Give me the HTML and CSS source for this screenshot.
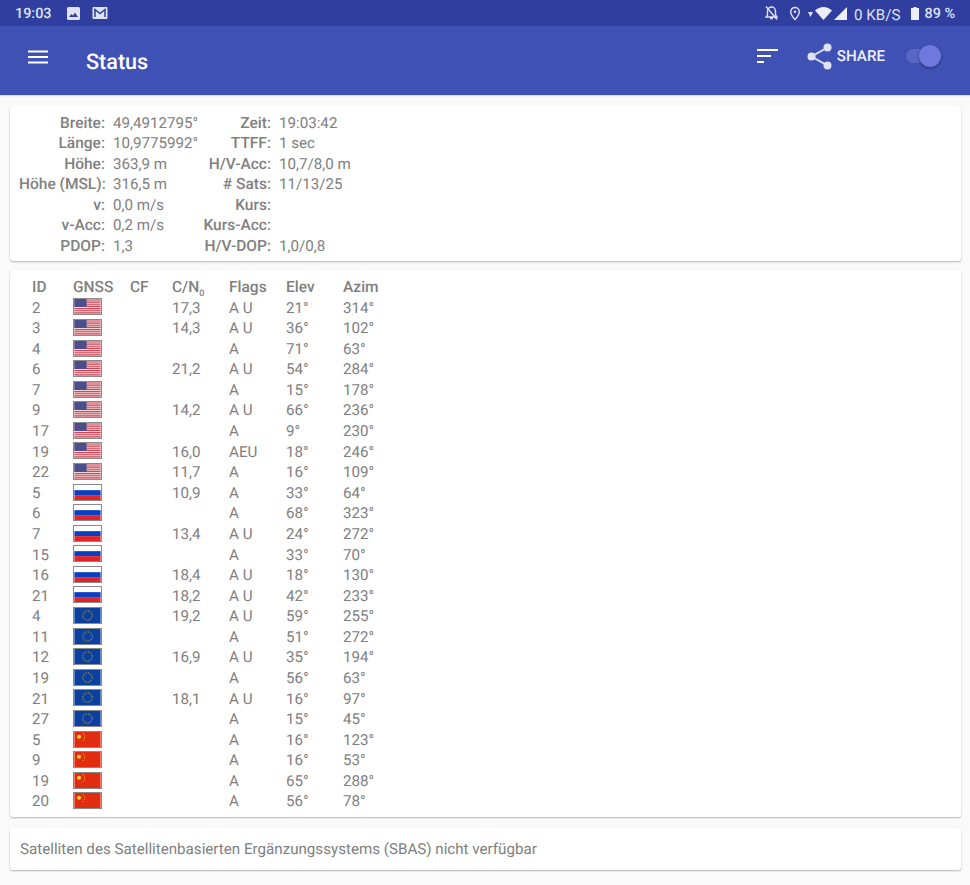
FILE: index.html
```html
<!DOCTYPE html>
<html lang="de">
<head>
<meta charset="utf-8">
<title>Status</title>
<link rel="stylesheet" href="styles.css">
</head>
<body>
<svg class="defs" width="0" height="0" aria-hidden="true">
  <symbol id="us" viewBox="0 0 28 16">
    <rect width="28" height="16" fill="#f3d6d6"/>
    <path d="M0 1h28M0 3.3h28M0 5.6h28M0 7.9h28M0 10.2h28M0 12.5h28M0 14.8h28" stroke="#c9485a" stroke-width="1.2"/>
    <rect width="13" height="8.5" fill="#4a4f8c"/>
  </symbol>
  <symbol id="ru" viewBox="0 0 28 16">
    <rect width="28" height="5.5" fill="#fff"/>
    <rect y="5.5" width="28" height="5.3" fill="#0b3fc0"/>
    <rect y="10.8" width="28" height="5.2" fill="#e0242c"/>
  </symbol>
  <symbol id="eu" viewBox="0 0 28 16">
    <rect width="28" height="16" fill="#0c3f9e"/>
    <circle cx="14" cy="8" r="5" fill="none" stroke="#8f9450" stroke-width="1.3" stroke-dasharray="1.3 1.3"/>
  </symbol>
  <symbol id="cn" viewBox="0 0 28 16">
    <rect width="28" height="16" fill="#e22c10"/>
    <circle cx="5" cy="5" r="2.2" fill="#f7d32c"/>
    <path d="M9 2h1M10.500 4.200h1M10.500 6.800h1M9 9h1" stroke="#f3b81f" stroke-width="1.100"/>
  </symbol>
</svg>

<div class="statusbar">
  <span class="time">19:03</span>
  <svg class="sb-icon" width="15" height="15" viewBox="0 0 15 15"><rect x="1" y="1" width="13" height="13" rx="1.500" fill="#dfe2f2"/><path d="M3 11l2.500-3 1.500 1.500 2-3 3 4.500z" fill="#303f9f"/></svg>
  <svg class="sb-icon mail" width="16" height="14" viewBox="0 0 16 14"><rect x="0.500" y="1" width="15" height="12" rx="1" fill="#dfe2f2"/><path d="M3 11V3.500l5 4 5-4V11" fill="none" stroke="#303f9f" stroke-width="1.500"/></svg>
  <span class="spacer"></span>
  <svg class="sb-icon" width="15" height="16" viewBox="0 0 15 16"><path d="M7.500 2a4 4 0 0 1 4 4v4l1.500 2H2l1.500-2V6a4 4 0 0 1 4-4zM6 13.500h3" fill="none" stroke="#dfe2f2" stroke-width="1.400"/><path d="M2 1.500l11 13" stroke="#dfe2f2" stroke-width="1.400"/></svg>
  <svg class="sb-icon pin" width="12" height="15" viewBox="0 0 12 15"><path d="M6 1.500a4.300 4.300 0 0 1 4.300 4.300C10.300 9 6 13.500 6 13.500S1.700 9 1.700 5.800A4.300 4.300 0 0 1 6 1.500z" fill="none" stroke="#dfe2f2" stroke-width="1.400"/><circle cx="6" cy="5.800" r="1.300" fill="#dfe2f2"/></svg>
  <svg class="sb-icon tri" width="5" height="5" viewBox="0 0 5 5"><path d="M0 0h5L2.500 5z" fill="#dfe2f2"/></svg>
  <svg class="sb-icon wifi" width="17" height="13" viewBox="0 0 17 13"><path d="M0 3.500C2.500 1.300 5.300 0 8.500 0S14.500 1.300 17 3.500L8.500 13z" fill="#eceef8"/></svg>
  <svg class="sb-icon sig" width="13" height="13" viewBox="0 0 13 13"><path d="M13 0v13H0z" fill="#eceef8"/></svg>
  <span class="kbs">0 KB/S</span>
  <svg class="sb-icon batt" width="8" height="13" viewBox="0 0 8 13"><path d="M2.500 0h3v1H8v12H0V1h2.500z" fill="#eceef8"/></svg>
  <span class="pct">89 %</span>
</div>

<header class="appbar">
  <svg class="menu" width="22" height="14" viewBox="0 0 22 14"><path d="M1 1.500h20M1 7h20M1 12.500h20" stroke="#fff" stroke-width="2"/></svg>
  <h1 class="title">Status</h1>
  <span class="spacer"></span>
  <svg class="sort" width="21" height="14" viewBox="0 0 21 14"><path d="M0 1h21M0 7h14M0 13h7" stroke="#fff" stroke-width="2"/></svg>
  <svg class="share" width="25" height="27" viewBox="0 0 25 27"><g fill="#dfe2f2"><circle cx="20.500" cy="4.500" r="4"/><circle cx="4.500" cy="13.500" r="4"/><circle cx="20.500" cy="22.500" r="4"/></g><path d="M20.500 4.500l-16 9 16 9" fill="none" stroke="#dfe2f2" stroke-width="2"/></svg>
  <span class="share-label">SHARE</span>
  <span class="switch"><span class="thumb"></span></span>
</header>

<main class="content">
  <section class="card info">
    <div class="lbl">Breite:</div><div>49,4912795°</div><div class="lbl">Zeit:</div><div>19:03:42</div>
    <div class="lbl">Länge:</div><div>10,9775992°</div><div class="lbl">TTFF:</div><div>1 sec</div>
    <div class="lbl">Höhe:</div><div>363,9 m</div><div class="lbl">H/V-Acc:</div><div>10,7/8,0 m</div>
    <div class="lbl">Höhe (MSL):</div><div>316,5 m</div><div class="lbl"># Sats:</div><div>11/13/25</div>
    <div class="lbl">v:</div><div>0,0 m/s</div><div class="lbl">Kurs:</div><div></div>
    <div class="lbl">v-Acc:</div><div>0,2 m/s</div><div class="lbl">Kurs-Acc:</div><div></div>
    <div class="lbl">PDOP:</div><div>1,3</div><div class="lbl">H/V-DOP:</div><div>1,0/0,8</div>
  </section>

  <section class="card sats">
    <div class="row head"><span>ID</span><span>GNSS</span><span>CF</span><span>C/N<sub>0</sub></span><span>Flags</span><span>Elev</span><span>Azim</span></div>
    <div class="row"><span>2</span><svg class="flag"><use href="#us"/></svg><span></span><span>17,3</span><span>A U</span><span>21°</span><span>314°</span></div>
    <div class="row"><span>3</span><svg class="flag"><use href="#us"/></svg><span></span><span>14,3</span><span>A U</span><span>36°</span><span>102°</span></div>
    <div class="row"><span>4</span><svg class="flag"><use href="#us"/></svg><span></span><span></span><span>A</span><span>71°</span><span>63°</span></div>
    <div class="row"><span>6</span><svg class="flag"><use href="#us"/></svg><span></span><span>21,2</span><span>A U</span><span>54°</span><span>284°</span></div>
    <div class="row"><span>7</span><svg class="flag"><use href="#us"/></svg><span></span><span></span><span>A</span><span>15°</span><span>178°</span></div>
    <div class="row"><span>9</span><svg class="flag"><use href="#us"/></svg><span></span><span>14,2</span><span>A U</span><span>66°</span><span>236°</span></div>
    <div class="row"><span>17</span><svg class="flag"><use href="#us"/></svg><span></span><span></span><span>A</span><span>9°</span><span>230°</span></div>
    <div class="row"><span>19</span><svg class="flag"><use href="#us"/></svg><span></span><span>16,0</span><span>AEU</span><span>18°</span><span>246°</span></div>
    <div class="row"><span>22</span><svg class="flag"><use href="#us"/></svg><span></span><span>11,7</span><span>A</span><span>16°</span><span>109°</span></div>
    <div class="row"><span>5</span><svg class="flag"><use href="#ru"/></svg><span></span><span>10,9</span><span>A</span><span>33°</span><span>64°</span></div>
    <div class="row"><span>6</span><svg class="flag"><use href="#ru"/></svg><span></span><span></span><span>A</span><span>68°</span><span>323°</span></div>
    <div class="row"><span>7</span><svg class="flag"><use href="#ru"/></svg><span></span><span>13,4</span><span>A U</span><span>24°</span><span>272°</span></div>
    <div class="row"><span>15</span><svg class="flag"><use href="#ru"/></svg><span></span><span></span><span>A</span><span>33°</span><span>70°</span></div>
    <div class="row"><span>16</span><svg class="flag"><use href="#ru"/></svg><span></span><span>18,4</span><span>A U</span><span>18°</span><span>130°</span></div>
    <div class="row"><span>21</span><svg class="flag"><use href="#ru"/></svg><span></span><span>18,2</span><span>A U</span><span>42°</span><span>233°</span></div>
    <div class="row"><span>4</span><svg class="flag"><use href="#eu"/></svg><span></span><span>19,2</span><span>A U</span><span>59°</span><span>255°</span></div>
    <div class="row"><span>11</span><svg class="flag"><use href="#eu"/></svg><span></span><span></span><span>A</span><span>51°</span><span>272°</span></div>
    <div class="row"><span>12</span><svg class="flag"><use href="#eu"/></svg><span></span><span>16,9</span><span>A U</span><span>35°</span><span>194°</span></div>
    <div class="row"><span>19</span><svg class="flag"><use href="#eu"/></svg><span></span><span></span><span>A</span><span>56°</span><span>63°</span></div>
    <div class="row"><span>21</span><svg class="flag"><use href="#eu"/></svg><span></span><span>18,1</span><span>A U</span><span>16°</span><span>97°</span></div>
    <div class="row"><span>27</span><svg class="flag"><use href="#eu"/></svg><span></span><span></span><span>A</span><span>15°</span><span>45°</span></div>
    <div class="row"><span>5</span><svg class="flag"><use href="#cn"/></svg><span></span><span></span><span>A</span><span>16°</span><span>123°</span></div>
    <div class="row"><span>9</span><svg class="flag"><use href="#cn"/></svg><span></span><span></span><span>A</span><span>16°</span><span>53°</span></div>
    <div class="row"><span>19</span><svg class="flag"><use href="#cn"/></svg><span></span><span></span><span>A</span><span>65°</span><span>288°</span></div>
    <div class="row"><span>20</span><svg class="flag"><use href="#cn"/></svg><span></span><span></span><span>A</span><span>56°</span><span>78°</span></div>
  </section>

  <section class="card note">Satelliten des Satellitenbasierten Ergänzungssystems (SBAS) nicht verfügbar</section>
</main>
</body>
</html>
```
FILE: styles.css
```css
* { box-sizing: border-box; }
html, body { margin: 0; height: 885px; overflow: hidden; }
body {
  background: #fafafa;
  font-family: Roboto, "Liberation Sans", sans-serif;
  font-size: 15.15px;
  color: #808080;
  text-rendering: geometricPrecision;
}
.defs { position: absolute; }
.spacer { flex: 1; }

.statusbar {
  height: 26px;
  background: #303f9f;
  color: #dfe2f2;
  display: flex;
  align-items: center;
  padding: 0 11px 0 15px;
  font-size: 14.4px;
  font-weight: 500;
}
.statusbar .time { margin-right: 14px; }
.sb-icon { display: block; flex: none; }
.mail { margin-left: 11px; }
.pin { margin-left: 10px; }
.tri { margin-left: 7px; margin-top: 2px; }
.wifi { margin-left: 2px; }
.sig { margin-left: 2px; }
.kbs { margin-left: 7px; margin-top: 3px; font-weight: 400; font-size: 15.15px; }
.batt { margin-left: 11px; }
.pct { margin-left: 5px; margin-right: 4px; }

.appbar {
  height: 69px;
  background: #3f51b5;
  display: flex;
  align-items: center;
  padding: 0 28px 9px 27px;
  box-shadow: 0 1px 1px rgba(0, 0, 0, .12);
}
.menu { display: block; margin-top: 2px; }
.title {
  margin: 14px 0 0 37px;
  color: #fff;
  font-size: 21.6px;
  font-weight: 500;
  line-height: 28px;
}
.sort { display: block; margin-right: 29px; }
.share { display: block; margin-right: 5px; }
.share-label { color: #eef0fa; font-size: 15.15px; font-weight: 500; margin-right: 21px; }
.switch {
  position: relative;
  display: block;
  width: 34px;
  height: 14px;
  margin-right: 2px;
  border-radius: 7px;
  background: #5866c4;
}
.thumb {
  position: absolute;
  right: -1px;
  top: -4px;
  width: 22px;
  height: 22px;
  border-radius: 50%;
  background: #6f79dd;
  box-shadow: 0 1px 3px rgba(0, 0, 0, .45);
}

.content {
  padding: 11px 9px 0 10px;
  display: flex;
  flex-direction: column;
  gap: 9px;
}
.card {
  background: #fff;
  border-radius: 3px;
  box-shadow: 0 1px 2px rgba(0, 0, 0, .28);
}
.info {
  height: 155px;
  padding: 6.500px 0 0 9px;
  display: grid;
  grid-template-columns: 94px 85px 81px 1fr;
  grid-auto-rows: 20.6px;
  line-height: 20.6px;
}
.lbl { font-weight: 500; font-size: 15.5px; text-align: right; padding-right: 8px; white-space: nowrap; }

.sats { height: 547px; padding: 7px 0 0 22px; }
.row {
  display: grid;
  grid-template-columns: 41px 57px 42px 57px 57px 57px 57px;
  height: 20.58px;
  line-height: 20.58px;
  align-items: center;
}
.head { font-weight: 500; font-size: 15.5px; }
.head sub { font-size: 9px; line-height: 0; }
.flag { display: block; width: 29px; height: 17px; border: 1px solid #8a8a8a; margin-top: -2px; }

.note {
  height: 42px;
  margin-top: 2px;
  padding: 0 0 0 10px;
  line-height: 43px;
}
```
